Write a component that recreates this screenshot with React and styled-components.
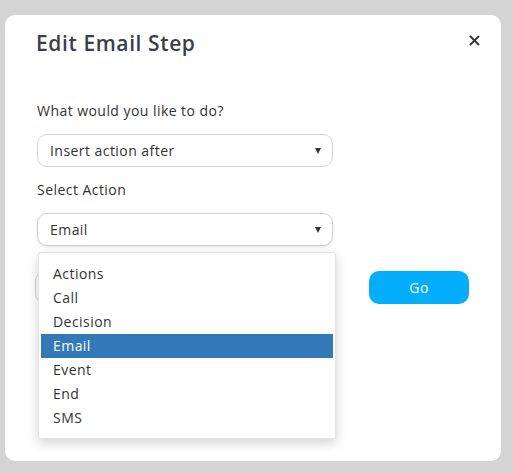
import React from "react";
import styled, { createGlobalStyle } from "styled-components";

const Global = createGlobalStyle`
  html, body { margin: 0; padding: 0; background: #d4d4d4; }
  body { font-family: "Open Sans", "Noto Sans", sans-serif; }
`;

const Page = styled.div`
  padding: 15px 12px 12px 5px;
`;

const Card = styled.div`
  position: relative;
  width: 496px;
  height: 446px;
  box-sizing: border-box;
  background: #fff;
  border-radius: 10px;
  padding: 14px 19px 0 31px;
`;

const Header = styled.div`
  display: flex;
  align-items: center;
  justify-content: space-between;
  height: 28px;
`;

const Title = styled.h2`
  margin: 0;
  font-size: 21px;
  font-weight: 600;
  color: #3a3f4b;
  letter-spacing: 0.6px;
`;

const Close = styled.button`
  border: 0;
  background: none;
  padding: 0;
  width: 16px;
  height: 16px;
  display: flex;
  align-items: center;
  justify-content: center;
  color: #333;
  margin-top: -6px;
`;

const Form = styled.div`
  margin-top: 44px;
  margin-left: 1px;
  display: flex;
  flex-direction: column;
`;

const Label = styled.div`
  font-size: 14px;
  line-height: 20px;
  color: #333;
  letter-spacing: 0.45px;
  margin-bottom: 13px;
`;

const Field = styled.div`
  position: relative;
  margin-bottom: ${(p) => p.$mb || 13}px;
`;

const Select = styled.div`
  width: 296px;
  height: 33px;
  box-sizing: border-box;
  border: 1px solid #d2d2d2;
  border-radius: 10px;
  display: flex;
  align-items: center;
  justify-content: space-between;
  padding: 0 11px 0 12px;
  font-size: 14px;
  letter-spacing: 0.45px;
  color: #333;
  background: #fff;
  box-shadow: ${(p) => (p.$focus ? "0 1px 3px rgba(0,0,0,0.12)" : "none")};
`;

const Arrow = styled.span`
  margin-left: auto;
  width: 0;
  height: 0;
  border-left: 3.5px solid transparent;
  border-right: 3.5px solid transparent;
  border-top: 6px solid #333;
`;

const Row = styled.div`
  display: flex;
  align-items: center;
  gap: 38px;
  margin-left: -2px;
`;

const GoButton = styled.button`
  width: 100px;
  height: 33px;
  border: 0;
  border-radius: 10px;
  background: #05aefc;
  color: #fff;
  font-family: inherit;
  font-size: 14px;
  font-weight: 500;
  letter-spacing: 0.4px;
`;

const Menu = styled.ul`
  position: absolute;
  top: 39px;
  left: 1px;
  width: 298px;
  box-sizing: border-box;
  margin: 0;
  padding: 9px 2px 8px;
  list-style: none;
  background: #fff;
  border: 1px solid #e4e4e4;
  border-radius: 3px;
  box-shadow: 0 4px 12px rgba(0, 0, 0, 0.18);
  z-index: 2;
`;

const Item = styled.li`
  height: 24px;
  line-height: 24px;
  padding-left: 12px;
  font-size: 14px;
  letter-spacing: 0.45px;
  color: ${(p) => (p.$active ? "#fff" : "#333")};
  background: ${(p) => (p.$active ? "#3379b7" : "transparent")};
`;

const items = ["Actions", "Call", "Decision", "Email", "Event", "End", "SMS"];

export default function App() {
  return (
    <>
      <Global />
      <Page>
        <Card>
          <Header>
            <Title>Edit Email Step</Title>
            <Close aria-label="close">
              <svg width="11" height="11" viewBox="0 0 11 11">
                <path d="M1 1L10 10M10 1L1 10" stroke="#333" strokeWidth="1.8" />
              </svg>
            </Close>
          </Header>
          <Form>
            <Label>What would you like to do?</Label>
            <Field>
              <Select>
                Insert action after
                <Arrow />
              </Select>
            </Field>
            <Label>Select Action</Label>
            <Field $mb={25}>
              <Select $focus>
                Email
                <Arrow />
              </Select>
              <Menu>
                {items.map((it) => (
                  <Item key={it} $active={it === "Email"}>
                    {it}
                  </Item>
                ))}
              </Menu>
            </Field>
            <Row>
              <Select>
                <Arrow />
              </Select>
              <GoButton>Go</GoButton>
            </Row>
          </Form>
        </Card>
      </Page>
    </>
  );
}
